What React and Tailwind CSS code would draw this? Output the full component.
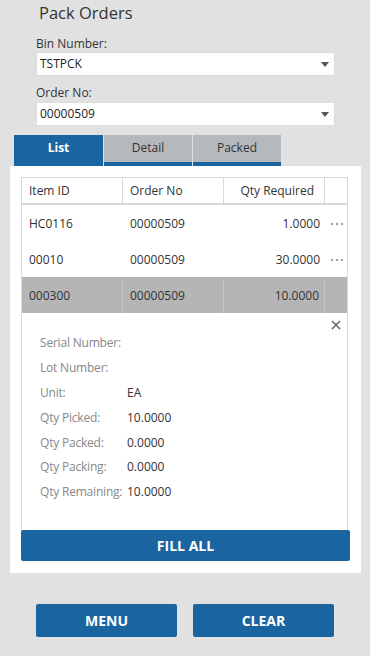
import React from 'react';

const rows = [
  { id: 'HC0116', order: '00000509', qty: '1.0000', more: true },
  { id: '00010', order: '00000509', qty: '30.0000', more: true },
  { id: '000300', order: '00000509', qty: '10.0000', selected: true },
];

const details = [
  ['Serial Number:', ''],
  ['Lot Number:', ''],
  ['Unit:', 'EA'],
  ['Qty Picked:', '10.0000'],
  ['Qty Packed:', '0.0000'],
  ['Qty Packing:', '0.0000'],
  ['Qty Remaining:', '10.0000'],
];

const Select = ({ value }) => (
  <div className="ml-[36px] w-[299px] h-[24px] bg-white border border-[#dcdcdc] flex items-center justify-between pl-[3px] pr-[5px] text-[12px] text-[#222]">
    <span>{value}</span>
    <svg width="8" height="5" viewBox="0 0 8 5">
      <path d="M0 0h8L4 5z" fill="#555" />
    </svg>
  </div>
);

const Dots = () => (
  <svg width="14" height="4" viewBox="0 0 14 4">
    <circle cx="2" cy="2" r="1.1" fill="#888" />
    <circle cx="7" cy="2" r="1.1" fill="#888" />
    <circle cx="12" cy="2" r="1.1" fill="#888" />
  </svg>
);

const App = () => {
  return (
    <div className="w-[370px] h-[656px] bg-[#e1e1e1] overflow-hidden text-[#333]" style={{ fontFamily: '"Open Sans", sans-serif' }}>
      <h1 className="pl-[39px] pt-[1px] h-[36px] text-[16.5px] font-normal text-[#333]">Pack Orders</h1>

      <div className="ml-[36px] h-[16px] text-[12px] leading-[16px]">Bin Number:</div>
      <Select value="TSTPCK" />

      <div className="ml-[36px] mt-[8px] h-[18px] text-[12px] leading-[18px]">Order No:</div>
      <Select value="00000509" />

      <div className="flex ml-[14px] mt-[9px] h-[31px]">
        <div className="w-[89px] bg-[#1a65a0] text-white text-[12px] font-bold flex items-start justify-center pt-[4px]">List</div>
        <div className="w-[88px] ml-[1px] bg-[#b5b9bd] border-b-[4px] border-[#1a65a0] text-[12px] flex items-start justify-center pt-[4px]">Detail</div>
        <div className="w-[88px] ml-[1px] bg-[#b5b9bd] border-b-[4px] border-[#1a65a0] text-[12px] flex items-start justify-center pt-[4px]">Packed</div>
      </div>

      <div className="ml-[10px] w-[351px] h-[407px] bg-white pt-[11px] px-[11px]">
        <div className="w-[327px] border border-[#d8d8d8] text-[12px]">
          <div className="flex h-[27px] border-b-2 border-[#d8d8d8] items-center">
            <div className="w-[101px] h-full flex items-center pl-[7px] border-r border-[#d8d8d8]">Item ID</div>
            <div className="w-[101px] h-full flex items-center pl-[7px] border-r border-[#d8d8d8]">Order No</div>
            <div className="w-[101px] h-full flex items-center justify-end pr-[10px] border-r border-[#d8d8d8]">Qty Required</div>
            <div className="flex-1" />
          </div>
          {rows.map((r) => (
            <div key={r.id} className={`flex h-[36px] items-center pt-[2px] ${r.selected ? 'bg-[#b5b5b5]' : ''}`}>
              <div className={`w-[101px] h-full flex items-center pl-[7px] ${r.selected ? 'border-r border-[#c4c4c4]' : ''}`}>{r.id}</div>
              <div className={`w-[101px] h-full flex items-center pl-[7px] ${r.selected ? 'border-r border-[#c4c4c4]' : ''}`}>{r.order}</div>
              <div className={`w-[101px] h-full flex items-center justify-end pr-[5px] ${r.selected ? 'border-r border-[#c4c4c4]' : ''}`}>{r.qty}</div>
              <div className="flex-1 flex items-center justify-end pr-[3px]">{r.more ? <Dots /> : null}</div>
            </div>
          ))}
          <div className="h-[217px] relative pt-[18px] pl-[18px]">
            <svg className="absolute right-[6px] top-[7px]" width="10" height="10" viewBox="0 0 10 10">
              <path d="M1 1l8 8M9 1l-8 8" stroke="#666" strokeWidth="1.6" />
            </svg>
            {details.map(([k, v]) => (
              <div key={k} className="flex h-[24.8px] items-center whitespace-nowrap">
                <div className="w-[87px] text-[#888] tracking-[-0.2px]">{k}</div>
                <div className="text-[#333]">{v}</div>
              </div>
            ))}
          </div>
        </div>
        <button className="w-[329px] h-[31px] -mt-[1px] bg-[#1a65a0] text-white text-[14px] font-bold rounded-[2px]">FILL ALL</button>
      </div>

      <div className="flex ml-[36px] mt-[31px] gap-[16px]">
        <button className="w-[141px] h-[33px] bg-[#1a65a0] text-white text-[14px] font-bold rounded-[2px]">MENU</button>
        <button className="w-[141px] h-[33px] bg-[#1a65a0] text-white text-[14px] font-bold rounded-[2px]">CLEAR</button>
      </div>
    </div>
  );
};

export default App;
